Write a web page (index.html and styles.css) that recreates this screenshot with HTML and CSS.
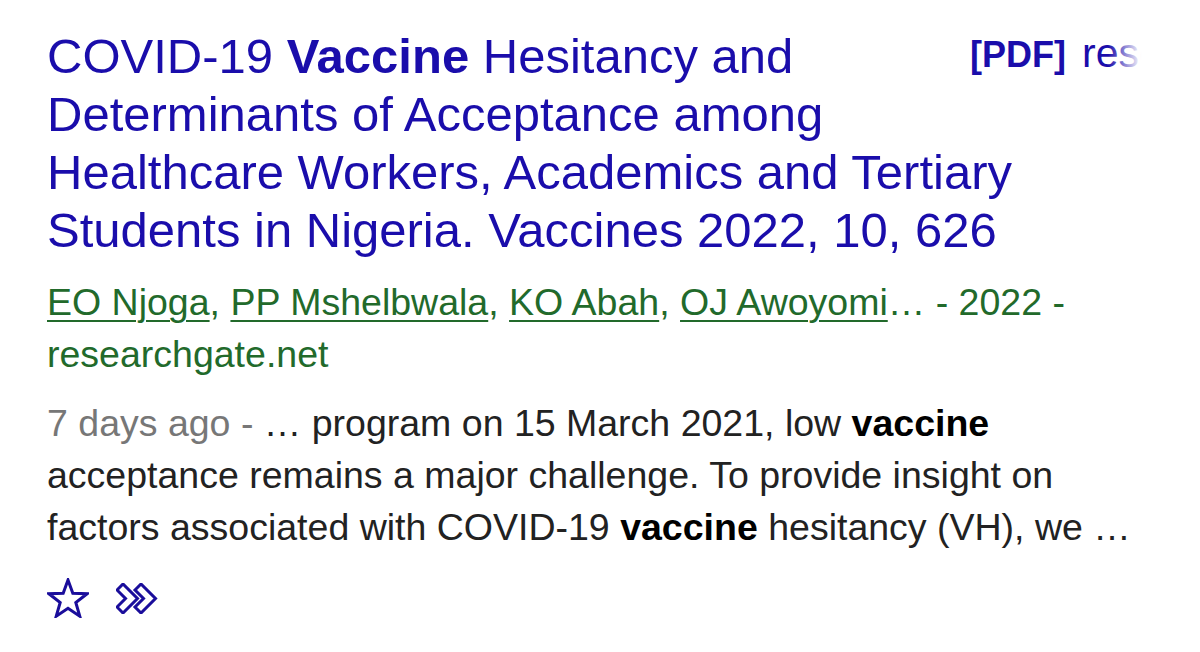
FILE: index.html
```html
<!DOCTYPE html>
<html>
<head>
<meta charset="utf-8">
<link rel="stylesheet" href="styles.css">
</head>
<body>
<div class="result">
  <div class="head">
    <div class="pdf"><span class="tag">[PDF]</span><span class="src">researchgate.net</span></div>
    <h3 class="title">COVID-19 <b>Vaccine</b> Hesitancy and Determinants of Acceptance among Healthcare Workers, Academics and Tertiary Students in Nigeria. Vaccines 2022, 10, 626</h3>
  </div>
  <div class="authors"><a>EO Njoga</a>, <a>PP Mshelbwala</a>, <a>KO Abah</a>, <a>OJ Awoyomi</a>… - 2022 - researchgate.net</div>
  <div class="snippet"><span class="date">7 days ago - </span>… program on 15 March 2021, low <b>vaccine</b> acceptance remains a major challenge. To provide insight on factors associated with COVID-19 <b>vaccine</b> hesitancy (VH), we …</div>
  <div class="actions">
    <svg class="star" width="42" height="40" viewBox="-1 -1 42 40">
      <polygon points="20,1 24.82,14.37 39,14.8 27.8,23.53 31.76,37.18 20,29.2 8.24,37.18 12.2,23.53 0.98,14.8 15.18,14.37" />
    </svg>
    <svg class="cite" width="43" height="31" viewBox="-1 -1 43 31">
      <polygon points="0,6 6,0 20.5,14.5 6,29 0,23 8.5,14.5" />
      <polygon points="18,6 24,0 38.5,14.5 24,29 18,23 26.5,14.5" />
    </svg>
  </div>
</div>
</body>
</html>
```

FILE: styles.css
```css
html, body {
  margin: 0;
  padding: 0;
  background: #ffffff;
}
body {
  font-family: "Liberation Sans", Arial, sans-serif;
  width: 1200px;
  height: 652px;
  overflow: hidden;
}
.result {
  padding: 27px 0 0 47px;
  width: 1000px;
}
.head {
  display: flow-root;
}
.title {
  margin: 0;
  font-size: 49px;
  line-height: 58px;
  font-weight: normal;
  color: #1a0dab;
}
.title b {
  font-weight: bold;
}
.pdf {
  float: right;
  width: 180px;
  margin-right: -103px;
  margin-top: 4px;
  height: 50px;
  line-height: 44px;
  white-space: nowrap;
  overflow: hidden;
  color: #1a0dab;
  position: relative;
}
.pdf::after {
  content: "";
  position: absolute;
  top: 0;
  right: 0;
  width: 42px;
  height: 100%;
  background: linear-gradient(to right, rgba(255,255,255,0), #ffffff 80%);
}
.tag {
  font-size: 36px;
  font-weight: bold;
}
.src {
  font-size: 41px;
  margin-left: 16px;
}
.authors {
  margin-top: 17px;
  font-size: 37.5px;
  line-height: 52px;
  color: #226a2b;
  width: 1060px;
}
.authors a {
  text-decoration: underline;
  text-decoration-thickness: 2px;
  text-underline-offset: 5px;
}
.snippet {
  margin-top: 17px;
  font-size: 37.5px;
  line-height: 52px;
  color: #222222;
  width: 1110px;
}
.snippet b {
  color: #000;
}
.date {
  color: #777777;
}
.actions {
  display: flex;
  align-items: center;
  gap: 27px;
  margin-top: 25px;
  margin-left: 0;
}
.actions svg polygon {
  fill: none;
  stroke: #1a0d9b;
  stroke-width: 3;
  stroke-linejoin: miter;
}
```
